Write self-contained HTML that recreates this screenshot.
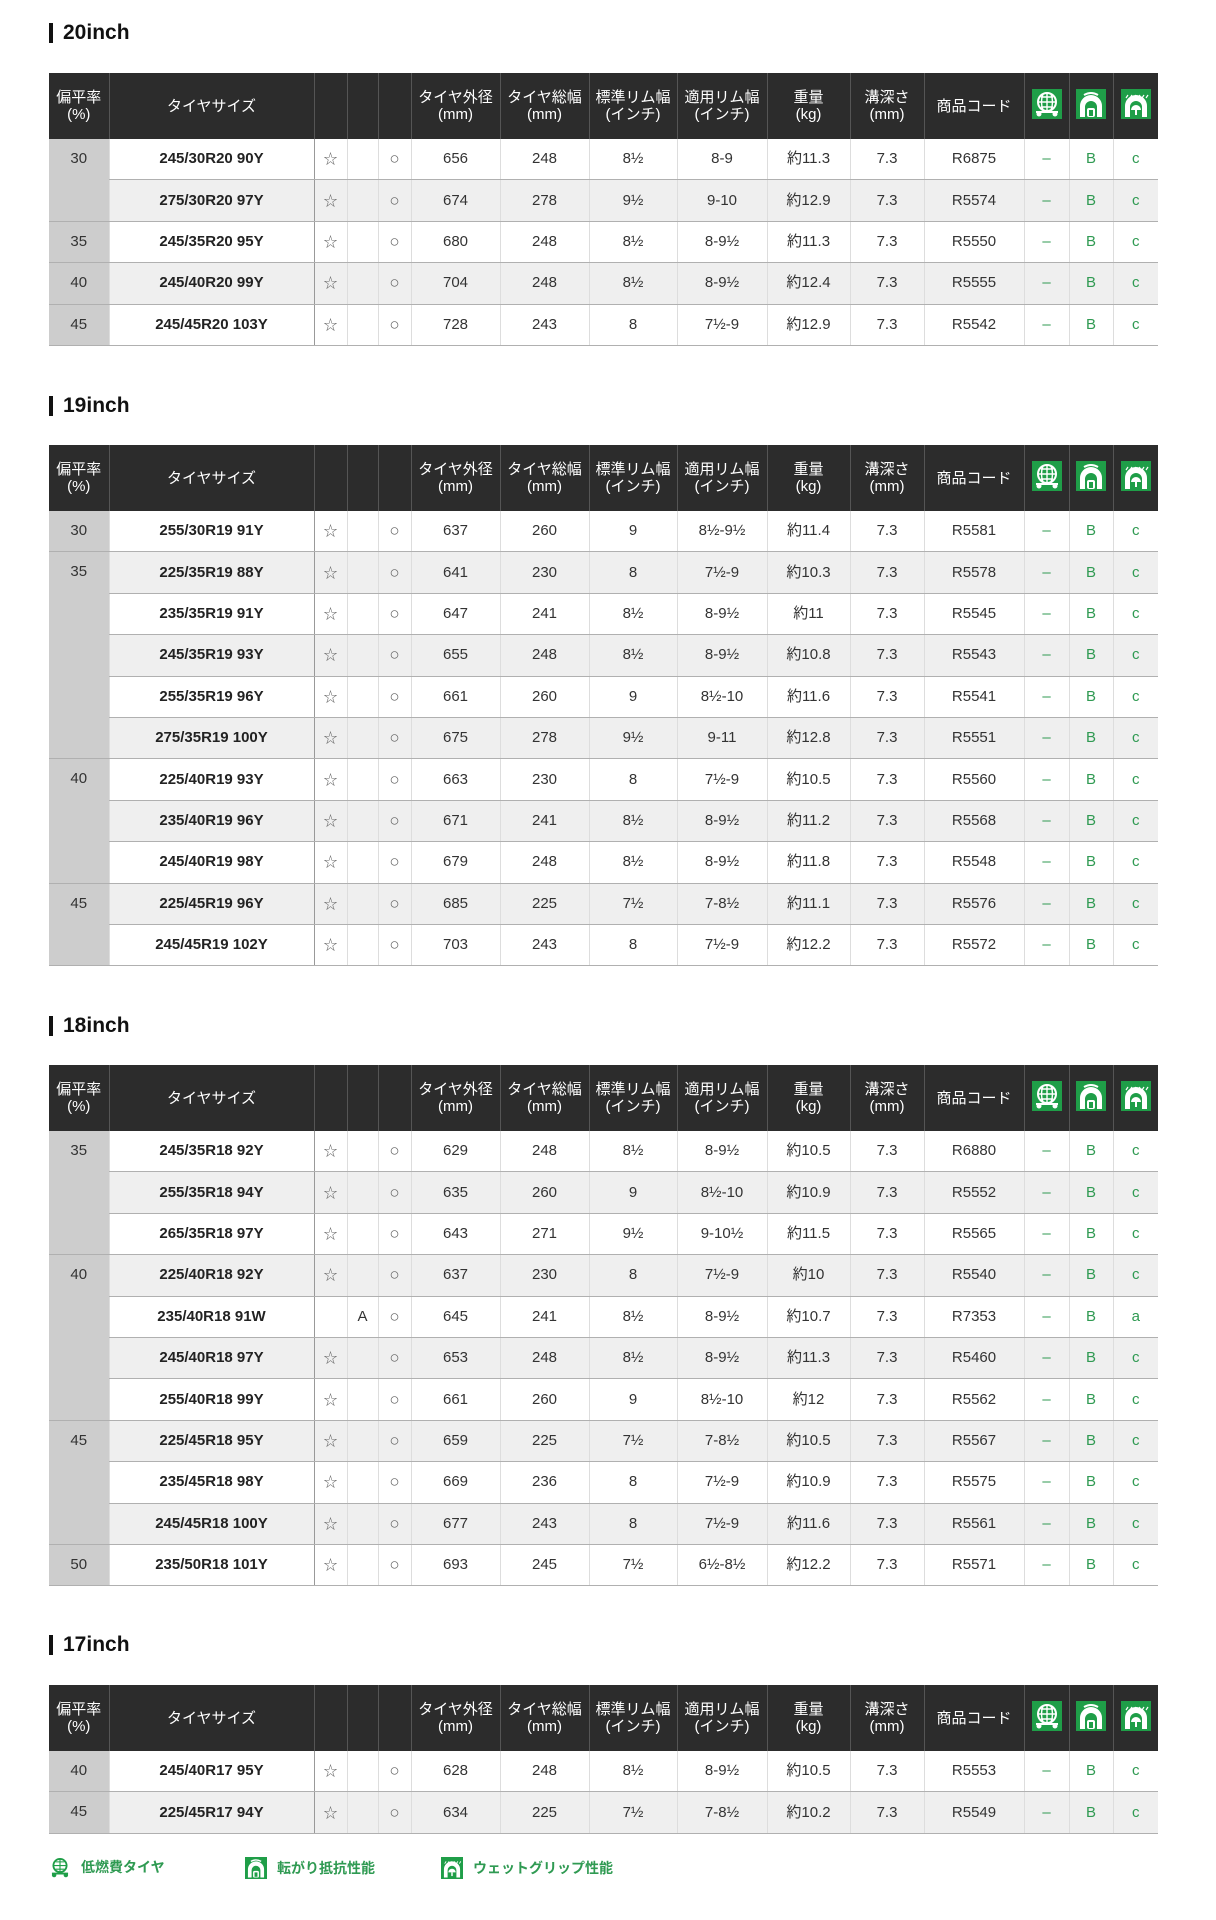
<!DOCTYPE html>
<html><head><meta charset="utf-8">
<style>
body{margin:0;background:#fff;font-family:"Liberation Sans","Noto Sans CJK JP",sans-serif;color:#333;}
.wrap{position:relative;width:1216px;height:1920px;}
h2{position:absolute;left:49px;margin:0;font-size:21px;font-weight:bold;color:#111;border-left:4px solid #111;padding-left:10px;line-height:20px;}
table{position:absolute;left:49px;width:1109px;border-collapse:collapse;table-layout:fixed;font-size:15px;}
th{background:#2c2c2c;color:#fff;font-weight:normal;height:66px;border-left:1px solid #555;font-size:15px;line-height:17px;padding:0;}
th:first-child{border-left:none;}
td{height:40.4px;border-bottom:1px solid #b0b0b0;border-left:1px solid #ddd;text-align:center;padding:0;line-height:40px;}
td.r{background:#cdcdcd;vertical-align:top;border-left:none;}
td.s{font-weight:bold;color:#222;border-right:1px solid #999;}
tr.g td{background:#efefef;}
tr.g td.r{background:#cdcdcd;}
td.st{color:#666;font-size:14px;}
td.o{color:#666;font-size:17px;}
td.gr{color:#2f9a52;}
.legend{position:absolute;top:1856px;left:49px;font-size:14px;color:#2f9a52;font-weight:bold;}
.legend span{position:absolute;white-space:nowrap;display:flex;align-items:center;gap:10px;}
</style></head><body><div class="wrap">

<svg width="0" height="0" style="position:absolute">
<defs>
<g id="i1"><rect width="30" height="30" fill="#1f9e48"/><circle cx="15" cy="13" r="9" fill="none" stroke="#fff" stroke-width="2"/><path d="M6 13h18M15 4v18M9 8h12M9 18h12M11 5q-3 8 0 16M19 5q3 8 0 16" stroke="#fff" stroke-width="1.4" fill="none"/><circle cx="7" cy="25" r="2.5" fill="#fff"/><circle cx="23" cy="25" r="2.5" fill="#fff"/><path d="M4 23h22" stroke="#fff" stroke-width="2"/></g>
<g id="i2"><rect width="30" height="30" fill="#1f9e48"/><path d="M4 28V17a11 11 0 0 1 22 0v11h-5V18a6 6 0 0 0-12 0v10z" fill="#fff"/><rect x="11" y="19" width="8" height="9" rx="2" fill="#fff"/><rect x="13" y="21" width="4" height="6" fill="#1f9e48"/><path d="M8 6q7-4 14 0" stroke="#fff" stroke-width="2" fill="none"/></g>
<g id="i3"><rect width="30" height="30" fill="#1f9e48"/><path d="M4 28V17a11 11 0 0 1 22 0v11h-5V18a6 6 0 0 0-12 0v10z" fill="#fff"/><path d="M10 21a5 5 0 0 1 10 0z" fill="#fff"/><path d="M15 21v5" stroke="#fff" stroke-width="2"/><path d="M7 6l-2 3M11 6l-2 3M15 6l-2 3M19 6l-2 3M23 6l-2 3M27 6l-2 3" stroke="#fff" stroke-width="1.2"/></g>
</defs></svg>

<h2 style="top:23px">20inch</h2>
<table style="top:73px">
<colgroup><col style="width:60px"><col style="width:205px"><col style="width:33px"><col style="width:31px"><col style="width:33px"><col style="width:89px"><col style="width:89px"><col style="width:88px"><col style="width:90px"><col style="width:83px"><col style="width:74px"><col style="width:100px"><col style="width:45px"><col style="width:44px"><col style="width:45px"></colgroup>
<tr><th>偏平率<br>(%)</th><th>タイヤサイズ</th><th></th><th></th><th></th><th>タイヤ外径<br>(mm)</th><th>タイヤ総幅<br>(mm)</th><th>標準リム幅<br>(インチ)</th><th>適用リム幅<br>(インチ)</th><th>重量<br>(kg)</th><th>溝深さ<br>(mm)</th><th>商品コード</th><th><svg width="30" height="30"><use href="#i1"/></svg></th><th><svg width="30" height="30"><use href="#i2"/></svg></th><th><svg width="30" height="30"><use href="#i3"/></svg></th></tr>
<tr><td class="r" rowspan="2">30</td><td class="s">245/30R20 90Y</td><td class="st">☆</td><td></td><td class="o">○</td><td>656</td><td>248</td><td>8½</td><td>8-9</td><td>約11.3</td><td>7.3</td><td>R6875</td><td class="gr">–</td><td class="gr">B</td><td class="gr">c</td></tr>
<tr class="g"><td class="s">275/30R20 97Y</td><td class="st">☆</td><td></td><td class="o">○</td><td>674</td><td>278</td><td>9½</td><td>9-10</td><td>約12.9</td><td>7.3</td><td>R5574</td><td class="gr">–</td><td class="gr">B</td><td class="gr">c</td></tr>
<tr><td class="r">35</td><td class="s">245/35R20 95Y</td><td class="st">☆</td><td></td><td class="o">○</td><td>680</td><td>248</td><td>8½</td><td>8-9½</td><td>約11.3</td><td>7.3</td><td>R5550</td><td class="gr">–</td><td class="gr">B</td><td class="gr">c</td></tr>
<tr class="g"><td class="r">40</td><td class="s">245/40R20 99Y</td><td class="st">☆</td><td></td><td class="o">○</td><td>704</td><td>248</td><td>8½</td><td>8-9½</td><td>約12.4</td><td>7.3</td><td>R5555</td><td class="gr">–</td><td class="gr">B</td><td class="gr">c</td></tr>
<tr><td class="r">45</td><td class="s">245/45R20 103Y</td><td class="st">☆</td><td></td><td class="o">○</td><td>728</td><td>243</td><td>8</td><td>7½-9</td><td>約12.9</td><td>7.3</td><td>R5542</td><td class="gr">–</td><td class="gr">B</td><td class="gr">c</td></tr>
</table>

<h2 style="top:396px">19inch</h2>
<table style="top:445px">
<colgroup><col style="width:60px"><col style="width:205px"><col style="width:33px"><col style="width:31px"><col style="width:33px"><col style="width:89px"><col style="width:89px"><col style="width:88px"><col style="width:90px"><col style="width:83px"><col style="width:74px"><col style="width:100px"><col style="width:45px"><col style="width:44px"><col style="width:45px"></colgroup>
<tr><th>偏平率<br>(%)</th><th>タイヤサイズ</th><th></th><th></th><th></th><th>タイヤ外径<br>(mm)</th><th>タイヤ総幅<br>(mm)</th><th>標準リム幅<br>(インチ)</th><th>適用リム幅<br>(インチ)</th><th>重量<br>(kg)</th><th>溝深さ<br>(mm)</th><th>商品コード</th><th><svg width="30" height="30"><use href="#i1"/></svg></th><th><svg width="30" height="30"><use href="#i2"/></svg></th><th><svg width="30" height="30"><use href="#i3"/></svg></th></tr>
<tr><td class="r">30</td><td class="s">255/30R19 91Y</td><td class="st">☆</td><td></td><td class="o">○</td><td>637</td><td>260</td><td>9</td><td>8½-9½</td><td>約11.4</td><td>7.3</td><td>R5581</td><td class="gr">–</td><td class="gr">B</td><td class="gr">c</td></tr>
<tr class="g"><td class="r" rowspan="5">35</td><td class="s">225/35R19 88Y</td><td class="st">☆</td><td></td><td class="o">○</td><td>641</td><td>230</td><td>8</td><td>7½-9</td><td>約10.3</td><td>7.3</td><td>R5578</td><td class="gr">–</td><td class="gr">B</td><td class="gr">c</td></tr>
<tr><td class="s">235/35R19 91Y</td><td class="st">☆</td><td></td><td class="o">○</td><td>647</td><td>241</td><td>8½</td><td>8-9½</td><td>約11</td><td>7.3</td><td>R5545</td><td class="gr">–</td><td class="gr">B</td><td class="gr">c</td></tr>
<tr class="g"><td class="s">245/35R19 93Y</td><td class="st">☆</td><td></td><td class="o">○</td><td>655</td><td>248</td><td>8½</td><td>8-9½</td><td>約10.8</td><td>7.3</td><td>R5543</td><td class="gr">–</td><td class="gr">B</td><td class="gr">c</td></tr>
<tr><td class="s">255/35R19 96Y</td><td class="st">☆</td><td></td><td class="o">○</td><td>661</td><td>260</td><td>9</td><td>8½-10</td><td>約11.6</td><td>7.3</td><td>R5541</td><td class="gr">–</td><td class="gr">B</td><td class="gr">c</td></tr>
<tr class="g"><td class="s">275/35R19 100Y</td><td class="st">☆</td><td></td><td class="o">○</td><td>675</td><td>278</td><td>9½</td><td>9-11</td><td>約12.8</td><td>7.3</td><td>R5551</td><td class="gr">–</td><td class="gr">B</td><td class="gr">c</td></tr>
<tr><td class="r" rowspan="3">40</td><td class="s">225/40R19 93Y</td><td class="st">☆</td><td></td><td class="o">○</td><td>663</td><td>230</td><td>8</td><td>7½-9</td><td>約10.5</td><td>7.3</td><td>R5560</td><td class="gr">–</td><td class="gr">B</td><td class="gr">c</td></tr>
<tr class="g"><td class="s">235/40R19 96Y</td><td class="st">☆</td><td></td><td class="o">○</td><td>671</td><td>241</td><td>8½</td><td>8-9½</td><td>約11.2</td><td>7.3</td><td>R5568</td><td class="gr">–</td><td class="gr">B</td><td class="gr">c</td></tr>
<tr><td class="s">245/40R19 98Y</td><td class="st">☆</td><td></td><td class="o">○</td><td>679</td><td>248</td><td>8½</td><td>8-9½</td><td>約11.8</td><td>7.3</td><td>R5548</td><td class="gr">–</td><td class="gr">B</td><td class="gr">c</td></tr>
<tr class="g"><td class="r" rowspan="2">45</td><td class="s">225/45R19 96Y</td><td class="st">☆</td><td></td><td class="o">○</td><td>685</td><td>225</td><td>7½</td><td>7-8½</td><td>約11.1</td><td>7.3</td><td>R5576</td><td class="gr">–</td><td class="gr">B</td><td class="gr">c</td></tr>
<tr><td class="s">245/45R19 102Y</td><td class="st">☆</td><td></td><td class="o">○</td><td>703</td><td>243</td><td>8</td><td>7½-9</td><td>約12.2</td><td>7.3</td><td>R5572</td><td class="gr">–</td><td class="gr">B</td><td class="gr">c</td></tr>
</table>

<h2 style="top:1016px">18inch</h2>
<table style="top:1065px">
<colgroup><col style="width:60px"><col style="width:205px"><col style="width:33px"><col style="width:31px"><col style="width:33px"><col style="width:89px"><col style="width:89px"><col style="width:88px"><col style="width:90px"><col style="width:83px"><col style="width:74px"><col style="width:100px"><col style="width:45px"><col style="width:44px"><col style="width:45px"></colgroup>
<tr><th>偏平率<br>(%)</th><th>タイヤサイズ</th><th></th><th></th><th></th><th>タイヤ外径<br>(mm)</th><th>タイヤ総幅<br>(mm)</th><th>標準リム幅<br>(インチ)</th><th>適用リム幅<br>(インチ)</th><th>重量<br>(kg)</th><th>溝深さ<br>(mm)</th><th>商品コード</th><th><svg width="30" height="30"><use href="#i1"/></svg></th><th><svg width="30" height="30"><use href="#i2"/></svg></th><th><svg width="30" height="30"><use href="#i3"/></svg></th></tr>
<tr><td class="r" rowspan="3">35</td><td class="s">245/35R18 92Y</td><td class="st">☆</td><td></td><td class="o">○</td><td>629</td><td>248</td><td>8½</td><td>8-9½</td><td>約10.5</td><td>7.3</td><td>R6880</td><td class="gr">–</td><td class="gr">B</td><td class="gr">c</td></tr>
<tr class="g"><td class="s">255/35R18 94Y</td><td class="st">☆</td><td></td><td class="o">○</td><td>635</td><td>260</td><td>9</td><td>8½-10</td><td>約10.9</td><td>7.3</td><td>R5552</td><td class="gr">–</td><td class="gr">B</td><td class="gr">c</td></tr>
<tr><td class="s">265/35R18 97Y</td><td class="st">☆</td><td></td><td class="o">○</td><td>643</td><td>271</td><td>9½</td><td>9-10½</td><td>約11.5</td><td>7.3</td><td>R5565</td><td class="gr">–</td><td class="gr">B</td><td class="gr">c</td></tr>
<tr class="g"><td class="r" rowspan="4">40</td><td class="s">225/40R18 92Y</td><td class="st">☆</td><td></td><td class="o">○</td><td>637</td><td>230</td><td>8</td><td>7½-9</td><td>約10</td><td>7.3</td><td>R5540</td><td class="gr">–</td><td class="gr">B</td><td class="gr">c</td></tr>
<tr><td class="s">235/40R18 91W</td><td></td><td>A</td><td class="o">○</td><td>645</td><td>241</td><td>8½</td><td>8-9½</td><td>約10.7</td><td>7.3</td><td>R7353</td><td class="gr">–</td><td class="gr">B</td><td class="gr">a</td></tr>
<tr class="g"><td class="s">245/40R18 97Y</td><td class="st">☆</td><td></td><td class="o">○</td><td>653</td><td>248</td><td>8½</td><td>8-9½</td><td>約11.3</td><td>7.3</td><td>R5460</td><td class="gr">–</td><td class="gr">B</td><td class="gr">c</td></tr>
<tr><td class="s">255/40R18 99Y</td><td class="st">☆</td><td></td><td class="o">○</td><td>661</td><td>260</td><td>9</td><td>8½-10</td><td>約12</td><td>7.3</td><td>R5562</td><td class="gr">–</td><td class="gr">B</td><td class="gr">c</td></tr>
<tr class="g"><td class="r" rowspan="3">45</td><td class="s">225/45R18 95Y</td><td class="st">☆</td><td></td><td class="o">○</td><td>659</td><td>225</td><td>7½</td><td>7-8½</td><td>約10.5</td><td>7.3</td><td>R5567</td><td class="gr">–</td><td class="gr">B</td><td class="gr">c</td></tr>
<tr><td class="s">235/45R18 98Y</td><td class="st">☆</td><td></td><td class="o">○</td><td>669</td><td>236</td><td>8</td><td>7½-9</td><td>約10.9</td><td>7.3</td><td>R5575</td><td class="gr">–</td><td class="gr">B</td><td class="gr">c</td></tr>
<tr class="g"><td class="s">245/45R18 100Y</td><td class="st">☆</td><td></td><td class="o">○</td><td>677</td><td>243</td><td>8</td><td>7½-9</td><td>約11.6</td><td>7.3</td><td>R5561</td><td class="gr">–</td><td class="gr">B</td><td class="gr">c</td></tr>
<tr><td class="r">50</td><td class="s">235/50R18 101Y</td><td class="st">☆</td><td></td><td class="o">○</td><td>693</td><td>245</td><td>7½</td><td>6½-8½</td><td>約12.2</td><td>7.3</td><td>R5571</td><td class="gr">–</td><td class="gr">B</td><td class="gr">c</td></tr>
</table>

<h2 style="top:1635px">17inch</h2>
<table style="top:1685px">
<colgroup><col style="width:60px"><col style="width:205px"><col style="width:33px"><col style="width:31px"><col style="width:33px"><col style="width:89px"><col style="width:89px"><col style="width:88px"><col style="width:90px"><col style="width:83px"><col style="width:74px"><col style="width:100px"><col style="width:45px"><col style="width:44px"><col style="width:45px"></colgroup>
<tr><th>偏平率<br>(%)</th><th>タイヤサイズ</th><th></th><th></th><th></th><th>タイヤ外径<br>(mm)</th><th>タイヤ総幅<br>(mm)</th><th>標準リム幅<br>(インチ)</th><th>適用リム幅<br>(インチ)</th><th>重量<br>(kg)</th><th>溝深さ<br>(mm)</th><th>商品コード</th><th><svg width="30" height="30"><use href="#i1"/></svg></th><th><svg width="30" height="30"><use href="#i2"/></svg></th><th><svg width="30" height="30"><use href="#i3"/></svg></th></tr>
<tr><td class="r">40</td><td class="s">245/40R17 95Y</td><td class="st">☆</td><td></td><td class="o">○</td><td>628</td><td>248</td><td>8½</td><td>8-9½</td><td>約10.5</td><td>7.3</td><td>R5553</td><td class="gr">–</td><td class="gr">B</td><td class="gr">c</td></tr>
<tr class="g"><td class="r">45</td><td class="s">225/45R17 94Y</td><td class="st">☆</td><td></td><td class="o">○</td><td>634</td><td>225</td><td>7½</td><td>7-8½</td><td>約10.2</td><td>7.3</td><td>R5549</td><td class="gr">–</td><td class="gr">B</td><td class="gr">c</td></tr>
</table>

<div class="legend">
<span style="left:0"><svg width="22" height="22" viewBox="0 0 30 30"><circle cx="15" cy="13" r="9" fill="none" stroke="#1f9e48" stroke-width="2.5"/><path d="M6 13h18M15 4v18M9 8h12M9 18h12" stroke="#1f9e48" stroke-width="1.5"/><path d="M4 24h22" stroke="#1f9e48" stroke-width="2.5"/><circle cx="7" cy="26" r="3" fill="#1f9e48"/><circle cx="23" cy="26" r="3" fill="#1f9e48"/></svg>低燃費タイヤ</span>
<span style="left:196px"><svg width="22" height="24" viewBox="0 0 30 30"><use href="#i2"/></svg>転がり抵抗性能</span>
<span style="left:392px"><svg width="22" height="24" viewBox="0 0 30 30"><use href="#i3"/></svg>ウェットグリップ性能</span>
</div>
</div></body></html>
